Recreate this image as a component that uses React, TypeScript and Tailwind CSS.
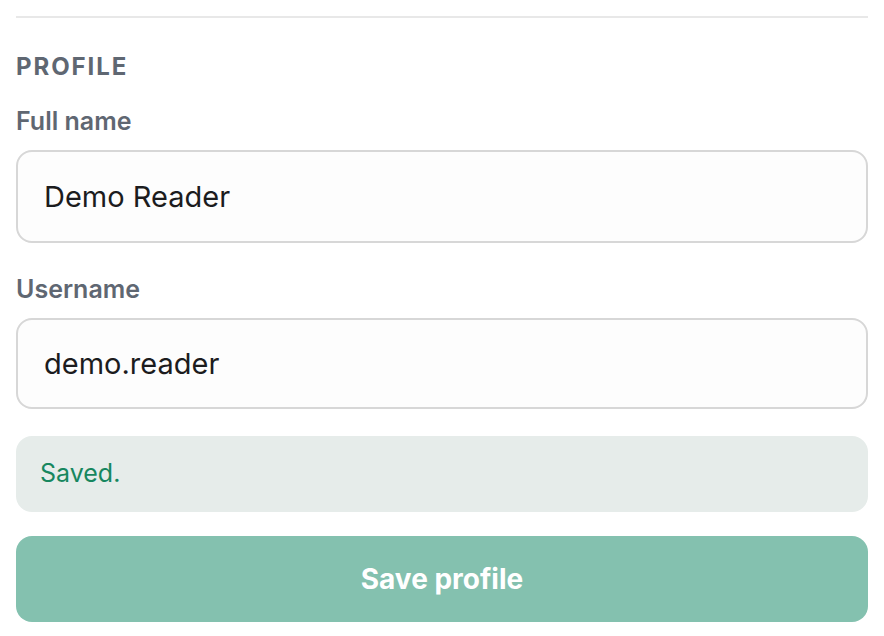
import { useState } from "react"

export default function App() {
  const [fullName, setFullName] = useState("Demo Reader")
  const [username, setUsername] = useState("demo.reader")

  return (
    <div className="min-h-screen bg-white px-4 pt-4 font-['Inter',sans-serif]">
      <div className="border-t-2 border-[#e8e8e8]" />

      <h2 className="mt-[33px] text-[24px] leading-[32px] font-bold uppercase tracking-[0.08em] text-[#5f6772]">
        Profile
      </h2>

      <div className="mt-[22px] flex flex-col">
        <label className="text-[25px] leading-[32px] font-semibold text-[#5f6772]">Full name</label>
        <input
          value={fullName}
          onChange={(e) => setFullName(e.target.value)}
          className="mt-[13px] h-[93px] w-full rounded-[16px] border-2 border-[#d7d7d7] bg-[#fdfdfd] px-[26px] text-[29px] text-[#1c1c1e] outline-none"
        />
      </div>

      <div className="mt-[30px] flex flex-col">
        <label className="text-[25px] leading-[32px] font-semibold text-[#5f6772]">Username</label>
        <input
          value={username}
          onChange={(e) => setUsername(e.target.value)}
          className="mt-[13px] h-[91px] w-full rounded-[16px] border-2 border-[#d7d7d7] bg-[#fdfdfd] px-[26px] text-[29px] text-[#1c1c1e] outline-none"
        />
      </div>

      <div className="mt-[27px] flex h-[76px] items-center rounded-[16px] bg-[#e6ecea] px-6 text-[25px] text-[#17875f]">
        Saved.
      </div>

      <button className="mt-[24px] flex h-[86px] w-full items-center justify-center rounded-[16px] bg-[#84c1af] text-[28px] font-bold text-white">
        Save profile
      </button>
    </div>
  )
}
